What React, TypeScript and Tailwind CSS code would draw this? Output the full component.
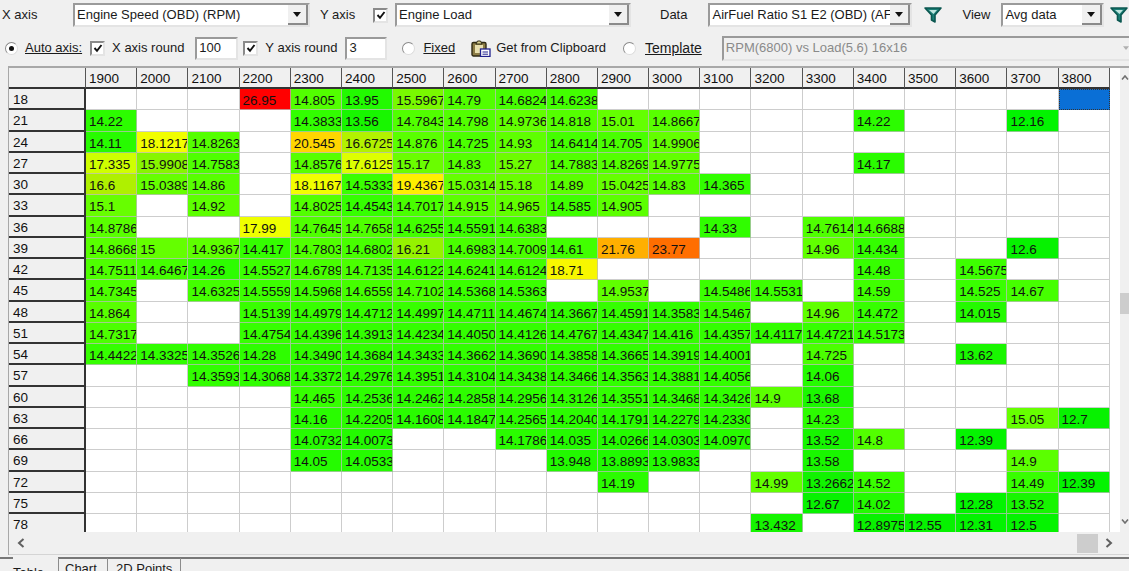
import React from 'react';

const COLS = [1900, 2000, 2100, 2200, 2300, 2400, 2500, 2600, 2700, 2800, 2900, 3000, 3100, 3200, 3300, 3400, 3500, 3600, 3700, 3800];

// each row: load, then cell text by rpm
const ROWS: [number, Record<number, string>][] = [
  [18, { 2200: '26.95', 2300: '14.805', 2400: '13.95', 2500: '15.5967', 2600: '14.79', 2700: '14.6824', 2800: '14.6238' }],
  [21, { 1900: '14.22', 2300: '14.3833', 2400: '13.56', 2500: '14.7843', 2600: '14.798', 2700: '14.9736', 2800: '14.818', 2900: '15.01', 3000: '14.8667', 3400: '14.22', 3700: '12.16' }],
  [24, { 1900: '14.11', 2000: '18.1217', 2100: '14.8263', 2300: '20.545', 2400: '16.6725', 2500: '14.876', 2600: '14.725', 2700: '14.93', 2800: '14.6414', 2900: '14.705', 3000: '14.9906' }],
  [27, { 1900: '17.335', 2000: '15.9908', 2100: '14.7583', 2300: '14.8576', 2400: '17.6125', 2500: '15.17', 2600: '14.83', 2700: '15.27', 2800: '14.7883', 2900: '14.8269', 3000: '14.9775', 3400: '14.17' }],
  [30, { 1900: '16.6', 2000: '15.0389', 2100: '14.86', 2300: '18.1167', 2400: '14.5333', 2500: '19.4367', 2600: '15.0314', 2700: '15.18', 2800: '14.89', 2900: '15.0425', 3000: '14.83', 3100: '14.365' }],
  [33, { 1900: '15.1', 2100: '14.92', 2300: '14.8025', 2400: '14.4543', 2500: '14.7017', 2600: '14.915', 2700: '14.965', 2800: '14.585', 2900: '14.905' }],
  [36, { 1900: '14.8786', 2200: '17.99', 2300: '14.7645', 2400: '14.7658', 2500: '14.6255', 2600: '14.5591', 2700: '14.6383', 3100: '14.33', 3300: '14.7614', 3400: '14.6688' }],
  [39, { 1900: '14.8668', 2000: '15', 2100: '14.9367', 2200: '14.417', 2300: '14.7803', 2400: '14.6802', 2500: '16.21', 2600: '14.6983', 2700: '14.7009', 2800: '14.61', 2900: '21.76', 3000: '23.77', 3300: '14.96', 3400: '14.434', 3700: '12.6' }],
  [42, { 1900: '14.7511', 2000: '14.6467', 2100: '14.26', 2200: '14.5527', 2300: '14.6789', 2400: '14.7135', 2500: '14.6122', 2600: '14.6241', 2700: '14.6124', 2800: '18.71', 3400: '14.48', 3600: '14.5675' }],
  [45, { 1900: '14.7345', 2100: '14.6325', 2200: '14.5559', 2300: '14.5968', 2400: '14.6559', 2500: '14.7102', 2600: '14.5368', 2700: '14.5363', 2900: '14.9537', 3100: '14.5486', 3200: '14.5531', 3400: '14.59', 3600: '14.525', 3700: '14.67' }],
  [48, { 1900: '14.864', 2200: '14.5139', 2300: '14.4979', 2400: '14.4712', 2500: '14.4997', 2600: '14.4711', 2700: '14.4674', 2800: '14.3667', 2900: '14.4591', 3000: '14.3583', 3100: '14.5467', 3300: '14.96', 3400: '14.472', 3600: '14.015' }],
  [51, { 1900: '14.7317', 2200: '14.4754', 2300: '14.4396', 2400: '14.3913', 2500: '14.4234', 2600: '14.4050', 2700: '14.4126', 2800: '14.4767', 2900: '14.4347', 3000: '14.416', 3100: '14.4357', 3200: '14.4117', 3300: '14.4721', 3400: '14.5173' }],
  [54, { 1900: '14.4422', 2000: '14.3325', 2100: '14.3526', 2200: '14.28', 2300: '14.3490', 2400: '14.3684', 2500: '14.3433', 2600: '14.3662', 2700: '14.3690', 2800: '14.3858', 2900: '14.3665', 3000: '14.3919', 3100: '14.4001', 3300: '14.725', 3600: '13.62' }],
  [57, { 2100: '14.3593', 2200: '14.3068', 2300: '14.3372', 2400: '14.2976', 2500: '14.3951', 2600: '14.3104', 2700: '14.3438', 2800: '14.3466', 2900: '14.3563', 3000: '14.3881', 3100: '14.4056', 3300: '14.06' }],
  [60, { 2300: '14.465', 2400: '14.2536', 2500: '14.2462', 2600: '14.2858', 2700: '14.2956', 2800: '14.3126', 2900: '14.3551', 3000: '14.3468', 3100: '14.3426', 3200: '14.9', 3300: '13.68' }],
  [63, { 2300: '14.16', 2400: '14.2205', 2500: '14.1608', 2600: '14.1847', 2700: '14.2565', 2800: '14.2040', 2900: '14.1791', 3000: '14.2279', 3100: '14.2330', 3300: '14.23', 3700: '15.05', 3800: '12.7' }],
  [66, { 2300: '14.0732', 2400: '14.0073', 2700: '14.1786', 2800: '14.035', 2900: '14.0266', 3000: '14.0303', 3100: '14.0970', 3300: '13.52', 3400: '14.8', 3600: '12.39' }],
  [69, { 2300: '14.05', 2400: '14.0533', 2800: '13.948', 2900: '13.8893', 3000: '13.9833', 3300: '13.58', 3700: '14.9' }],
  [72, { 2900: '14.19', 3200: '14.99', 3300: '13.2662', 3400: '14.52', 3700: '14.49', 3800: '12.39' }],
  [75, { 3300: '12.67', 3400: '14.02', 3600: '12.28', 3700: '13.52' }],
  [78, { 3200: '13.432', 3400: '12.8975', 3500: '12.55', 3600: '12.31', 3700: '12.5' }],
];

// [afr, r, g] stops of the green > yellow > red ramp
const RAMP = [
  [12, 0, 245],
  [13, 10, 240],
  [14, 35, 250],
  [14.5, 55, 255],
  [15, 100, 255],
  [16, 135, 245],
  [16.6, 175, 240],
  [17.3, 205, 255],
  [18, 240, 255],
  [19.4, 255, 240],
  [20.5, 255, 215],
  [21.76, 255, 175],
  [23.77, 255, 110],
  [26.95, 255, 0],
];

function cellColor(v: number) {
  for (let i = 1; i < RAMP.length; i++) {
    const [a, r0, g0] = RAMP[i - 1];
    const [b, r1, g1] = RAMP[i];
    if (v <= b) {
      const k = Math.max(0, (v - a) / (b - a));
      return `rgb(${Math.round(r0 + (r1 - r0) * k)},${Math.round(g0 + (g1 - g0) * k)},0)`;
    }
  }
  return 'rgb(255,0,0)';
}

function Check() {
  return (
    <span className="flex h-[15px] w-[15px] shrink-0 items-center justify-center border-2 border-t-[#8a8a8a] border-l-[#8a8a8a] border-r-[#e4e4e4] border-b-[#e4e4e4] bg-white">
      <svg viewBox="0 0 10 10" className="h-[10px] w-[10px]">
        <path d="M1.5 5 L4 7.8 L8.5 2" fill="none" stroke="#111" strokeWidth="1.9" />
      </svg>
    </span>
  );
}

function Radio({ on }: { on?: boolean }) {
  return (
    <span className="flex h-[13px] w-[13px] shrink-0 items-center justify-center rounded-full border border-t-[#8a8a8a] border-l-[#8a8a8a] border-r-[#dcdcdc] border-b-[#dcdcdc] bg-white">
      {on && <span className="h-[5px] w-[5px] rounded-full bg-[#111]" />}
    </span>
  );
}

function Combo({ text, width, ml }: { text: string; width: string; ml: string }) {
  return (
    <div className={`flex h-[24px] shrink-0 items-center border-2 border-t-[#9a9a9a] border-l-[#9a9a9a] border-r-[#e4e4e4] border-b-[#e4e4e4] bg-white ${width} ${ml}`}>
      <span className="min-w-0 flex-1 overflow-hidden whitespace-nowrap pl-[2px]">{text}</span>
      <span className="flex h-full w-[20px] shrink-0 items-center justify-center border-r-2 border-b-2 border-r-[#8a8a8a] border-b-[#8a8a8a] bg-[#f0f0f0]">
        <svg viewBox="0 0 8 5" className="h-[5px] w-[8px]"><path d="M0 0 H8 L4 5 Z" fill="#111" /></svg>
      </span>
    </div>
  );
}

function Funnel({ ml }: { ml: string }) {
  return (
    <svg viewBox="0 0 20 18" className={`h-[18px] w-[20px] shrink-0 ${ml}`}>
      <path d="M2 2 H18 L12 9 V16 L8.5 14 V9 Z" fill="#1b7f76" stroke="#0b5750" strokeWidth="1.6" strokeLinejoin="round" />
      <path d="M6 4 H14 L10.5 8 Z" fill="#bfe6df" />
    </svg>
  );
}

function ClipboardIcon() {
  return (
    <svg viewBox="0 0 20 17" className="ml-[16px] h-[17px] w-[20px] shrink-0">
      <rect x="1" y="2.5" width="14" height="13.5" rx="1.5" fill="#8c7c46" stroke="#2f2a14" strokeWidth="1.4" />
      <rect x="4" y="5" width="8" height="8" fill="#e8dfae" />
      <path d="M5 4 L6.5 1 H9.5 L11 4 Z" fill="#d9cf8f" stroke="#2f2a14" />
      <rect x="9.5" y="9" width="9.5" height="7.5" fill="#fff" stroke="#23238e" strokeWidth="1.3" />
      <path d="M11.5 12 H17 M11.5 14.2 H17" stroke="#23238e" />
    </svg>
  );
}

export default function App() {
  return (
    <div className="flex h-[571px] w-[1129px] flex-col overflow-hidden bg-[#f0f0f0] font-['Liberation_Sans',sans-serif] text-[13px] text-[#1a1a1a]">
      {/* axis pickers */}
      <div className="flex h-[30px] shrink-0 items-center pl-[2px]">
        <span className="w-[71px] shrink-0">X axis</span>
        <Combo text="Engine Speed (OBD) (RPM)" width="w-[237px]" ml="ml-0" />
        <span className="ml-[10px] w-[36px] shrink-0">Y axis</span>
        <span className="ml-[17px]"><Check /></span>
        <Combo text="Engine Load" width="w-[236px]" ml="ml-[7px]" />
        <span className="ml-[29px] shrink-0">Data</span>
        <Combo text="AirFuel Ratio S1 E2 (OBD) (AFR)" width="w-[204px]" ml="ml-[21px]" />
        <Funnel ml="ml-[11px]" />
        <span className="ml-[19px] shrink-0">View</span>
        <Combo text="Avg data" width="w-[103px]" ml="ml-[11px]" />
        <Funnel ml="ml-[5px]" />
      </div>

      {/* rounding options */}
      <div className="flex h-[36px] shrink-0 items-center pl-[5px]">
        <Radio on />
        <span className="ml-[7px] underline">Auto axis:</span>
        <span className="ml-[8px]"><Check /></span>
        <span className="ml-[7px]">X axis round</span>
        <span className="ml-[11px] flex h-[23px] w-[43px] items-center border-2 border-t-[#9a9a9a] border-l-[#9a9a9a] border-r-[#e4e4e4] border-b-[#e4e4e4] bg-white pl-[2px]">100</span>
        <span className="ml-[5px]"><Check /></span>
        <span className="ml-[7px]">Y axis round</span>
        <span className="ml-[8px] flex h-[23px] w-[42px] items-center border-2 border-t-[#9a9a9a] border-l-[#9a9a9a] border-r-[#e4e4e4] border-b-[#e4e4e4] bg-white pl-[2px]">3</span>
        <span className="ml-[15px]"><Radio /></span>
        <span className="ml-[8px] underline">Fixed</span>
        <ClipboardIcon />
        <span className="ml-[5px]">Get from Clipboard</span>
        <span className="ml-[17px]"><Radio /></span>
        <span className="ml-[9px] text-[14px] underline">Template</span>
        <div className="ml-[20px] flex h-[25px] min-w-0 flex-1 items-center border-2 border-t-[#9a9a9a] border-l-[#9a9a9a] border-r-0 border-b-[#e4e4e4] pl-[2px] text-[#8a8a8a]">
          <span className="flex-1 whitespace-nowrap">RPM(6800) vs Load(5.6) 16x16</span>
          <svg viewBox="0 0 8 5" className="h-[4px] w-[6px] shrink-0"><path d="M0 0 H8 L4 5 Z" fill="#b0b0b0" /></svg>
        </div>
      </div>

      {/* table plus scrollbars */}
      <div className="ml-[8px] flex h-[489px] shrink-0 flex-col border-t-2 border-l border-t-[#a8a8a8] border-l-[#a8a8a8]">
        <div className="flex min-h-0 flex-1">
          <div className="min-w-0 flex-1 overflow-hidden bg-white text-[13.5px] text-[#111]">
            <div className="grid grid-cols-[77px_repeat(20,51.2px)] grid-rows-[21px] auto-rows-[21.25px]">
              <div className="border-r border-b-2 border-r-[#555] border-b-[#333] bg-[#f0f0f0]" />
              {COLS.map((c) => (
                <div key={c} className="overflow-hidden border-r border-b-2 border-r-[#555] border-b-[#333] bg-[#f0f0f0] pl-[3px] leading-[22px]">{c}</div>
              ))}
              {ROWS.map(([load, cells]) => (
                <React.Fragment key={load}>
                  <div className="overflow-hidden border-r-2 border-b-2 border-r-[#333] border-b-[#333] bg-[#f0f0f0] pl-[4px] leading-[22px]">{load}</div>
                  {COLS.map((c) => {
                    const t = cells[c];
                    if (load === 18 && c === 3800) {
                      return <div key={c} className="border border-dotted border-[#333] bg-[#0a6fd6]" />;
                    }
                    return (
                      <div
                        key={c}
                        className="overflow-hidden whitespace-nowrap border-r border-b border-r-[#bcbcbc]/75 border-b-[#bcbcbc]/75 pl-[3px] leading-[23px]"
                        style={t ? { backgroundColor: cellColor(parseFloat(t)) } : undefined}
                      >
                        {t}
                      </div>
                    );
                  })}
                </React.Fragment>
              ))}
            </div>
          </div>
          {/* vertical scrollbar */}
          <div className="flex w-[9px] shrink-0 flex-col items-end bg-[#f0f0f0] pt-[7px]">
            <svg viewBox="0 0 8 5" className="h-[5px] w-[8px] shrink-0"><path d="M1 4.5 L4 1 L7 4.5" fill="none" stroke="#707070" strokeWidth="1.6" /></svg>
            <div className="mt-[213px] h-[21px] w-full shrink-0 bg-[#cdcdcd]" />
            <svg viewBox="0 0 8 5" className="mt-auto mb-[8px] h-[5px] w-[8px] shrink-0"><path d="M1 0.5 L4 4 L7 0.5" fill="none" stroke="#707070" strokeWidth="1.6" /></svg>
          </div>
        </div>
        {/* horizontal scrollbar */}
        <div className="flex h-[23px] shrink-0 items-center border-b border-b-[#d4d4d4] bg-[#f0f0f0] pl-[8px] pr-[16px]">
          <svg viewBox="0 0 8 10" className="h-[10px] w-[8px]"><path d="M6.5 1 L2 5 L6.5 9" fill="none" stroke="#606060" strokeWidth="2" /></svg>
          <div className="ml-auto h-[19px] w-[21px] bg-[#cdcdcd]" />
          <svg viewBox="0 0 8 10" className="ml-[7px] h-[10px] w-[8px]"><path d="M1.5 1 L6 5 L1.5 9" fill="none" stroke="#606060" strokeWidth="2" /></svg>
        </div>
      </div>

      {/* tabs */}
      <div className="mt-[2px] flex min-h-0 flex-1 border-t-2 border-t-[#777] pl-[13px]">
        <span className="-mt-[2px] w-[45px] bg-[#f0f0f0] pt-[6px]">Table</span>
        <span className="-mt-[1px] w-[50px] border-x border-x-[#8c8c8c] pl-[6px] pt-[1px]">Chart</span>
        <span className="-mt-[1px] w-[73px] border-r border-r-[#8c8c8c] pl-[8px] pt-[1px]">2D Points</span>
      </div>
    </div>
  );
}
